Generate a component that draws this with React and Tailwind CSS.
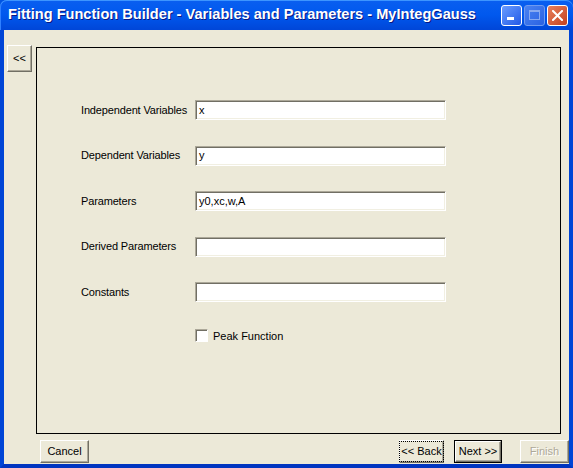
import React from 'react';

const font = { fontFamily: '"Liberation Sans", Arial, sans-serif' };

function Field({ label, value }) {
  return (
    <div className="flex items-center h-5">
      <div className="w-[114px] text-[11px] tracking-[-0.15px] text-black whitespace-nowrap">{label}</div>
      <div className="w-[251px] h-5 bg-white border border-t-[#aca899] border-l-[#aca899] border-b-white border-r-white shadow-[inset_1px_1px_0_#716f64,inset_-1px_-1px_0_#f1efe2] px-[3px] flex items-center text-[11px] text-black">
        {value}
      </div>
    </div>
  );
}

function ClassicButton({ children, w, isDefault, focus, disabled }) {
  return (
    <div
      className={
        'h-[23px] flex items-center justify-center bg-[#ece9d8] text-[11px] whitespace-nowrap ' +
        (isDefault ? 'border border-black ' : '')
      }
      style={{ width: w }}
    >
      <div className="w-full h-full flex items-center justify-center border border-t-white border-l-white border-b-[#716f64] border-r-[#716f64] shadow-[inset_-1px_-1px_0_#aca899]">
        <span
          className={
            (focus ? 'outline outline-1 outline-dotted outline-black px-[1px] py-[1px] ' : '') +
            (disabled ? 'text-[#aca899] [text-shadow:1px_1px_0_#fff]' : 'text-black')
          }
        >
          {children}
        </span>
      </div>
    </div>
  );
}

export default function App() {
  return (
    <div className="w-[573px] h-[468px] flex flex-col bg-[#0054e3]" style={font}>
      {/* Title bar */}
      <div className="h-[30px] flex items-center rounded-t-[7px] bg-gradient-to-b from-[#0a5ff0] via-[#0058ee] to-[#0046d8] shadow-[inset_0_1px_0_#3d95ff,inset_1px_0_0_#3080ff] pl-[8px] pr-[5px]">
        <div className="flex-1 text-white font-bold text-[14.6px] [text-shadow:1px_1px_0_#0a1883] whitespace-nowrap">
          Fitting Function Builder - Variables and Parameters - MyIntegGauss
        </div>
        <div className="flex gap-[2px] items-center">
          <div className="w-[21px] h-[21px] rounded-[3px] border border-white bg-gradient-to-br from-[#6a9cff] to-[#2258e6] flex items-end pl-[5px] pb-[5px]">
            <div className="w-[7px] h-[3px] bg-white" />
          </div>
          <div className="w-[21px] h-[21px] rounded-[3px] border border-[#6f9af0] bg-gradient-to-br from-[#4a82f2] to-[#2a62e2] flex items-center justify-center">
            <div className="w-[11px] h-[10px] border border-[#88aaf0] border-t-2" />
          </div>
          <div className="w-[21px] h-[21px] rounded-[3px] border border-white bg-gradient-to-br from-[#e8805c] to-[#c4401c] flex items-center justify-center">
            <svg width="11" height="11" viewBox="0 0 11 11">
              <path d="M1 1 L10 10 M10 1 L1 10" stroke="#fff" strokeWidth="2" strokeLinecap="square" />
            </svg>
          </div>
        </div>
      </div>

      {/* Body */}
      <div className="flex-1 flex flex-col bg-[#ece9d8] border-l-4 border-r-4 border-b-4 border-l-[#0045d6] border-r-[#0045d6] border-b-[#0035c0]">
        <div className="flex items-start pl-[3px] pt-[15px]">
          <div className="w-[25px] h-[27px] flex items-center justify-center text-[11px] text-black border border-t-white border-l-white border-b-[#716f64] border-r-[#716f64] shadow-[inset_-1px_-1px_0_#aca899]">
            &lt;&lt;
          </div>
          <div className="ml-[4px] mt-[2px] w-[525px] h-[387px] border border-black pl-[44px] pt-[52px] flex flex-col gap-[25.5px]">
            <Field label="Independent Variables" value="x" />
            <Field label="Dependent Variables" value="y" />
            <Field label="Parameters" value="y0,xc,w,A" />
            <Field label="Derived Parameters" value="" />
            <Field label="Constants" value="" />
            <div className="flex items-center ml-[114px] gap-[5px] text-[11px] text-black">
              <div className="w-[13px] h-[13px] bg-white border border-t-[#aca899] border-l-[#aca899] border-b-white border-r-white shadow-[inset_1px_1px_0_#716f64]" />
              <span>Peak Function</span>
            </div>
          </div>
        </div>
        <div className="flex items-center mt-[6px] pl-[36px]">
          <ClassicButton w={49}>Cancel</ClassicButton>
          <div className="ml-[310px]">
            <ClassicButton w={45} focus>&lt;&lt; Back</ClassicButton>
          </div>
          <div className="ml-[10px]">
            <ClassicButton w={48} isDefault>Next &gt;&gt;</ClassicButton>
          </div>
          <div className="ml-[18px]">
            <ClassicButton w={49} disabled>Finish</ClassicButton>
          </div>
        </div>
      </div>
    </div>
  );
}
